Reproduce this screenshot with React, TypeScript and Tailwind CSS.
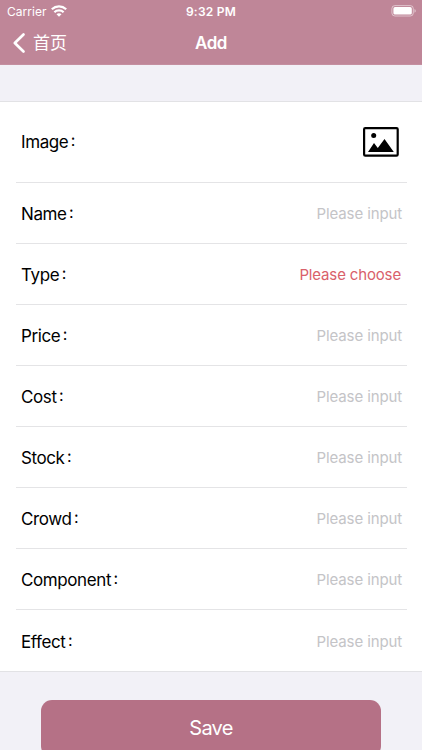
import React from 'react';

const FONT = "font-['Inter','Noto_Sans_CJK_SC',sans-serif]";

type Field = { label: string; placeholder: string; required?: boolean };

const fields: Field[] = [
  { label: 'Name', placeholder: 'Please input' },
  { label: 'Type', placeholder: 'Please choose', required: true },
  { label: 'Price', placeholder: 'Please input' },
  { label: 'Cost', placeholder: 'Please input' },
  { label: 'Stock', placeholder: 'Please input' },
  { label: 'Crowd', placeholder: 'Please input' },
  { label: 'Component', placeholder: 'Please input' },
  { label: 'Effect', placeholder: 'Please input' },
];

function WifiIcon() {
  return (
    <svg width="16" height="12" viewBox="0 0 16 12" fill="none" stroke="#fff" strokeWidth="2.2">
      <path d="M.8 4.3C4.9.5 11.1.5 15.2 4.3" />
      <path d="M3.4 7.2c2.5-2.4 6.7-2.4 9.2 0" />
      <path d="M8 11.8 5.5 9.3c1.4-1.4 3.6-1.4 5 0z" fill="#fff" stroke="none" />
    </svg>
  );
}

function BatteryIcon() {
  return (
    <svg width="26" height="12" viewBox="0 0 26 12" fill="none">
      <rect x="0.9" y="0.6" width="21.4" height="10.4" rx="3" stroke="#fff" strokeOpacity="0.5" />
      <rect x="2.4" y="2.1" width="18.4" height="7.4" rx="1.6" fill="#fff" />
      <path d="M23.5 4v3.8c1.7-.6 1.7-3.2 0-3.8z" fill="#fff" fillOpacity="0.55" />
    </svg>
  );
}

function PictureIcon() {
  return (
    <svg width="36" height="30" viewBox="0 0 36 30">
      <rect x="1.1" y="1.1" width="33.6" height="27.6" rx="1.2" fill="none" stroke="#000" strokeWidth="2.2" />
      <circle cx="10.7" cy="8.6" r="2.5" fill="#000" />
      <path d="M5 25 11 16l3.8 5L21.5 12 30.8 25z" fill="#000" />
    </svg>
  );
}

function Label({ text }: { text: string }) {
  return (
    <div className="flex items-center whitespace-nowrap pt-px text-[17px] leading-6 text-black">
      <span className="tracking-[-0.4px]">{text}</span>
      <span className="mb-[4px] ml-[2.5px] text-[16px]">:</span>
    </div>
  );
}

export default function App() {
  return (
    <div className={`flex h-[750px] w-[422px] flex-col overflow-hidden bg-[#f2f1f7] ${FONT}`}>
      <header className="flex h-[65px] shrink-0 flex-col border-b border-[#c48fa0] bg-[#bf8698] text-white">
        <div className="grid h-[22px] shrink-0 grid-cols-3 items-center">
          <div className="flex items-center gap-[5px] pl-[7px]">
            <span className="w-[39px] pt-px text-[12px] leading-4 tracking-[0.05px]">Carrier</span>
            <WifiIcon />
          </div>
          <span className="pt-px text-center text-[12px] font-semibold leading-4 tracking-[0.25px]">9:32 PM</span>
          <div className="flex justify-end pr-[5px]"><BatteryIcon /></div>
        </div>
        <div className="grid h-[42px] grid-cols-3 items-center">
          <div className="flex items-center gap-[7px] pl-[12px]">
            <svg width="14" height="22" viewBox="0 0 14 22" fill="none" stroke="#fff" strokeWidth="2.7" strokeLinecap="round" strokeLinejoin="round">
              <path d="M11.5 2.5 2.8 11l8.7 8.5" />
            </svg>
            <span className="text-[17px] leading-6">首页</span>
          </div>
          <span className="text-center text-[17px] font-semibold leading-6 tracking-[-0.5px]">Add</span>
        </div>
      </header>

      <main className="mt-[35.5px] shrink-0 border-y border-[#e2e2e5] bg-white">
        <div className="ml-4 mr-[15px] flex h-[81px] items-center justify-between border-b border-[#e4e4e6] pl-[5px] pr-2">
          <Label text="Image" />
          <PictureIcon />
        </div>
        {fields.map((f) => (
          <div key={f.label} className="ml-4 mr-[15px] flex h-[61.15px] items-center justify-between border-b border-[#e4e4e6] pl-[5px] pr-[5px] pt-px last:h-[60.2px] last:border-b-0">
            <Label text={f.label} />
            <span className={f.required ? 'mr-[1px] pt-px text-[15px] leading-6 tracking-[-0.15px] text-[#d9616b]' : 'pt-px text-[15px] leading-6 tracking-[-0.12px] text-[#c4c4c7]'}>
              {f.placeholder}
            </span>
          </div>
        ))}
      </main>

      <button className="mx-[41px] mt-[28px] h-[57px] shrink-0 rounded-[11px] bg-[#b57186] text-[20px] leading-6 tracking-[-0.7px] text-white">
        Save
      </button>
    </div>
  );
}
